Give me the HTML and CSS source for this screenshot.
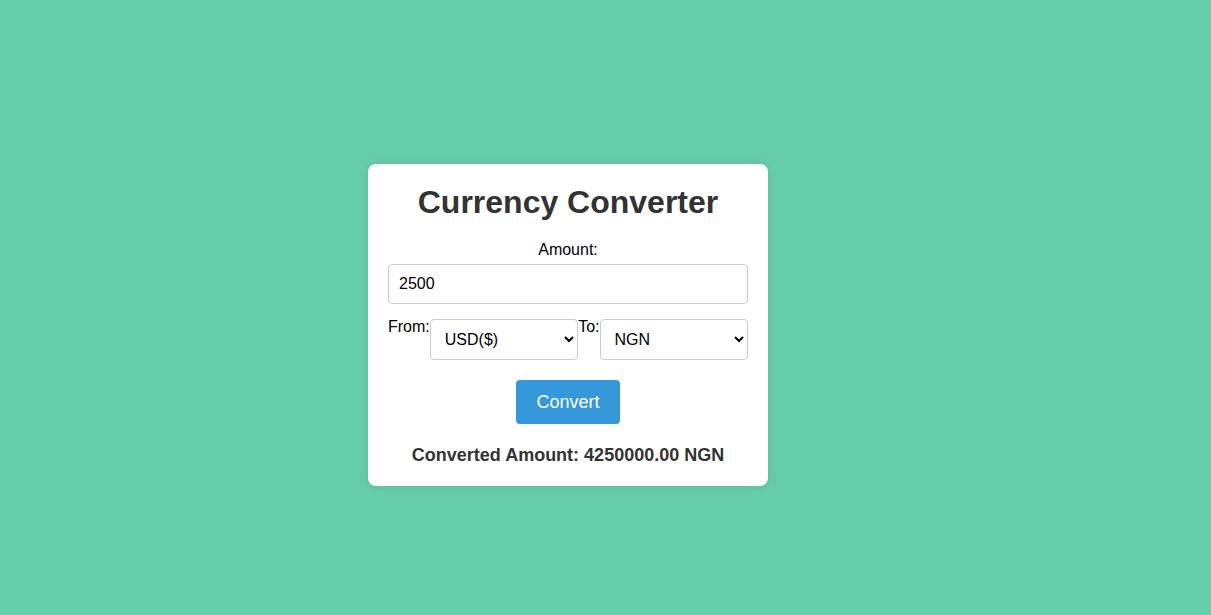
FILE: index.html
```html
<!DOCTYPE html>
<html lang="en">
<head>
<meta charset="utf-8">
<title>Currency Converter</title>
<link rel="stylesheet" href="styles.css">
</head>
<body>
  <div class="card">
    <h1 class="title">Currency Converter</h1>
    <label class="amount-label" for="amount">Amount:</label>
    <input class="amount-input" id="amount" type="number" value="2500">
    <div class="row">
      <label class="row-label" for="from">From:</label>
      <select class="currency" id="from">
        <option>USD($)</option>
      </select>
      <label class="row-label" for="to">To:</label>
      <select class="currency" id="to">
        <option>NGN</option>
      </select>
    </div>
    <button class="convert" type="button">Convert</button>
    <p class="result">Converted Amount: 4250000.00 NGN</p>
  </div>
</body>
</html>
```

FILE: styles.css
```css
html, body {
  margin: 0;
  height: 100%;
}
body {
  background: #66cdaa;
  font-family: "Liberation Sans", Arial, sans-serif;
  display: flex;
  align-items: center;
  justify-content: center;
  box-sizing: border-box;
  padding: 35px 75px 0 0;
}
.card {
  width: 360px;
  padding: 20px;
  background: #fff;
  border-radius: 8px;
  box-shadow: 0 0 10px rgba(0, 0, 0, 0.1);
  text-align: center;
}
.title {
  margin: 0 0 20px;
  font-size: 32px;
  line-height: 37px;
  font-weight: bold;
  color: #333;
}
.amount-label {
  display: block;
  font-size: 16px;
  line-height: 18px;
  margin-bottom: 5px;
  color: #000;
}
.amount-input {
  display: block;
  width: 100%;
  box-sizing: border-box;
  height: 40px;
  padding: 10px;
  font-family: "Liberation Sans", Arial, sans-serif;
  font-size: 16px;
  border: 1px solid #ccc;
  border-radius: 4px;
  color: #000;
  -moz-appearance: textfield;
}
.amount-input::-webkit-outer-spin-button,
.amount-input::-webkit-inner-spin-button {
  -webkit-appearance: none;
  margin: 0;
}
.row {
  display: flex;
  align-items: flex-start;
  margin-top: 14px;
}
.row-label {
  font-size: 16px;
  line-height: 18px;
  color: #000;
}
.currency {
  flex: 1;
  min-width: 0;
  margin-top: 1px;
  height: 41px;
  box-sizing: border-box;
  padding: 0 10px;
  font-family: "Liberation Sans", Arial, sans-serif;
  font-size: 16px;
  border: 1px solid #ccc;
  border-radius: 4px;
  background: #fff;
  color: #000;
}
.convert {
  margin-top: 20px;
  padding: 10px 20px;
  line-height: 24px;
  font-family: "Liberation Sans", Arial, sans-serif;
  font-size: 18px;
  color: #fff;
  background: #3498db;
  border: none;
  border-radius: 4px;
  cursor: pointer;
}
.result {
  margin: 21px 0 0;
  font-size: 18px;
  line-height: 21px;
  font-weight: bold;
  color: #333;
}
```
